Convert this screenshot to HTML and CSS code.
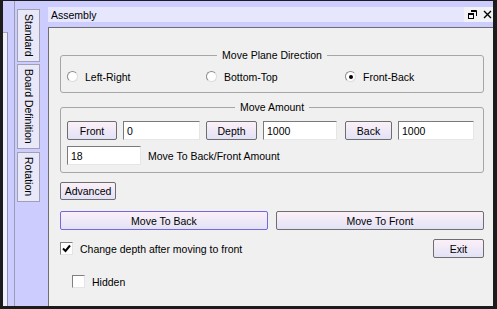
FILE: index.html
```html
<!DOCTYPE html>
<html lang="en">

<head>
  <meta charset="UTF-8">
  <title>Assembly</title>
  <link rel="stylesheet" href="styles.css">
</head>

<body>
  <div class="screen">
    <div class="side">
      <div class="side-panel"></div>
    </div>

    <!-- 竖向选项卡 -->
    <div class="tabs">
      <div class="tab tab-std">Standard</div>
      <div class="tab tab-board">Board Definition</div>
      <div class="tab tab-rot">Rotation</div>
    </div>

    <div class="window">
      <div class="titlebar">
        <span class="title">Assembly</span>
        <span class="ctrls">
          <svg width="9" height="9" viewBox="0 0 9 9">
            <path d="M3 0.5h5.5v5.5M3 1.5h5.5" fill="none" stroke="#000" stroke-width="1"/>
            <rect x="0.5" y="3.5" width="5" height="5" fill="#f4f4f4" stroke="#000"/>
            <path d="M0.5 4.5h5" stroke="#000"/>
          </svg>
          <svg width="9" height="9" viewBox="0 0 9 9">
            <path d="M1 1L8 8M8 1L1 8" stroke="#000" stroke-width="1.4"/>
          </svg>
        </span>
      </div>

      <div class="content">
        <fieldset class="group group-dir">
          <legend>Move Plane Direction</legend>
          <div class="radios">
            <label class="opt"><span class="radio"></span>Left-Right</label>
            <label class="opt"><span class="radio"></span>Bottom-Top</label>
            <label class="opt"><span class="radio on"></span>Front-Back</label>
          </div>
        </fieldset>

        <fieldset class="group group-amount">
          <legend>Move Amount</legend>
          <div class="amount-row">
            <button class="btn">Front</button>
            <input type="text" class="field" value="0">
            <button class="btn">Depth</button>
            <input type="text" class="field" value="1000">
            <button class="btn btn-back">Back</button>
            <input type="text" class="field" value="1000">
          </div>
          <div class="step-row">
            <input type="text" class="field field-step" value="18">
            <span>Move To Back/Front Amount</span>
          </div>
        </fieldset>

        <button class="btn btn-adv">Advanced</button>

        <div class="move-row">
          <button class="btn btn-focus">Move To Back</button>
          <button class="btn">Move To Front</button>
        </div>

        <div class="check-row">
          <label class="opt"><span class="check on"><svg width="11" height="11" viewBox="0 0 11 11"><path d="M2 5.5L4.5 8L9 2.5" fill="none" stroke="#000" stroke-width="2"/></svg></span>Change depth after moving to front</label>
          <button class="btn btn-exit">Exit</button>
        </div>

        <div class="hidden-row">
          <label class="opt"><span class="check"></span>Hidden</label>
        </div>
      </div>
    </div>
  </div>
</body>

</html>
```

FILE: styles.css
```css
/* 重置默认样式 */
* {
  margin: 0;
  padding: 0;
  box-sizing: border-box;
}

body {
  background-color: #1c1c1c;
  font-family: "Liberation Sans", Arial, sans-serif;
  font-size: 10.5px;
  color: #000;
}

.screen {
  display: flex;
  width: 490px;
  height: 305px;
  margin: 1px 0 0 3px;
  background-color: #ccccff;
  overflow: hidden;
}

/* 左侧窄条 */
.side {
  width: 11px;
  padding-top: 31px;
}

.side-panel {
  width: 5px;
  height: 100%;
  background-color: #eeeefc;
  border-top: 1px solid #a4a4c4;
  border-right: 1px solid #9090b0;
}

/* 选项卡 */
.tabs {
  width: 33px;
  border-left: 1px solid #9c9cb0;
  padding: 8px 0 0 2px;
  display: flex;
  flex-direction: column;
  gap: 2px;
}

.tab {
  width: 23px;
  border: 1px solid #a0a0b4;
  background-color: #e8e8f8;
  writing-mode: vertical-rl;
  line-height: 21px;
  padding-top: 4px;
}

.tab-std {
  height: 53px;
}

.tab-board {
  height: 85px;
}

.tab-rot {
  height: 50px;
  margin-top: 1px;
}

/* 窗口 */
.window {
  flex: 1;
  display: flex;
  flex-direction: column;
  padding: 6px 0 0 1px;
}

.titlebar {
  height: 15px;
  display: flex;
  align-items: center;
  justify-content: space-between;
  background-color: #e6e6fc;
  padding-left: 3px;
}

.ctrls {
  display: flex;
  align-items: center;
  gap: 6px;
  height: 100%;
  padding: 0 1px 0 4px;
  background-color: #f2f2f6;
}

.content {
  flex: 1;
  margin-top: 5px;
  background-color: #f0f0f0;
  border-top: 1px solid #6e6e6e;
  border-left: 1px solid #6e6e6e;
  padding: 21px 9px 0 11px;
}

/* 分组框 */
.group {
  border: 1px solid #a6a6a6;
  border-radius: 3px;
  padding: 0 6px;
  min-width: 0;
}

.group legend {
  margin: 0 auto;
  padding: 0 5px;
  line-height: 12px;
}

.group-dir {
  padding-top: 9px;
  padding-bottom: 9px;
}

.group-amount {
  margin-top: 8px;
  padding-top: 8px;
  padding-bottom: 7px;
}

.radios {
  display: grid;
  grid-template-columns: 139px 139px 1fr;
  height: 13px;
}

.opt {
  display: flex;
  align-items: center;
  gap: 7px;
}

.radio {
  width: 11px;
  height: 11px;
  border-radius: 50%;
  border: 1px solid;
  border-color: #8c8c8c #dcdcdc #dcdcdc #8c8c8c;
  background-color: #fff;
  display: flex;
  align-items: center;
  justify-content: center;
}

.radio.on::after {
  content: "";
  width: 4px;
  height: 4px;
  border-radius: 50%;
  background-color: #000;
}

.check {
  width: 13px;
  height: 13px;
  border: 1px solid;
  border-color: #808080 #e4e4e4 #e4e4e4 #808080;
  background-color: #fff;
  display: flex;
  align-items: center;
  justify-content: center;
}

/* 按钮和输入框 */
.btn {
  font: inherit;
  height: 19px;
  border: 1px solid #6e6e6e;
  border-radius: 2px;
  background: linear-gradient(#fcf0f8, #e2e2f6);
  color: #000;
}

.field {
  font: inherit;
  height: 19px;
  padding: 0 3px;
  background-color: #fff;
  border: 1px solid;
  border-color: #7a7a7a #e6e6e6 #e6e6e6 #7a7a7a;
}

.amount-row {
  display: grid;
  grid-template-columns: 50px 77px 51px 74px 49px 76px;
  column-gap: 6px;
}

.btn-back {
  margin-left: 2px;
}

.step-row {
  display: flex;
  align-items: center;
  gap: 7px;
  margin-top: 6px;
}

.field-step {
  width: 74px;
}

.btn-adv {
  margin-top: 9px;
  width: 56px;
  height: 18px;
}

.move-row {
  display: grid;
  grid-template-columns: 1fr 1fr;
  column-gap: 8px;
  margin-top: 11px;
}

.btn-focus {
  border-color: #7468dc;
}

.check-row {
  display: flex;
  align-items: center;
  justify-content: space-between;
  margin-top: 9px;
}

.btn-exit {
  width: 51px;
}

.hidden-row {
  margin: 17px 0 0 12px;
}
```
